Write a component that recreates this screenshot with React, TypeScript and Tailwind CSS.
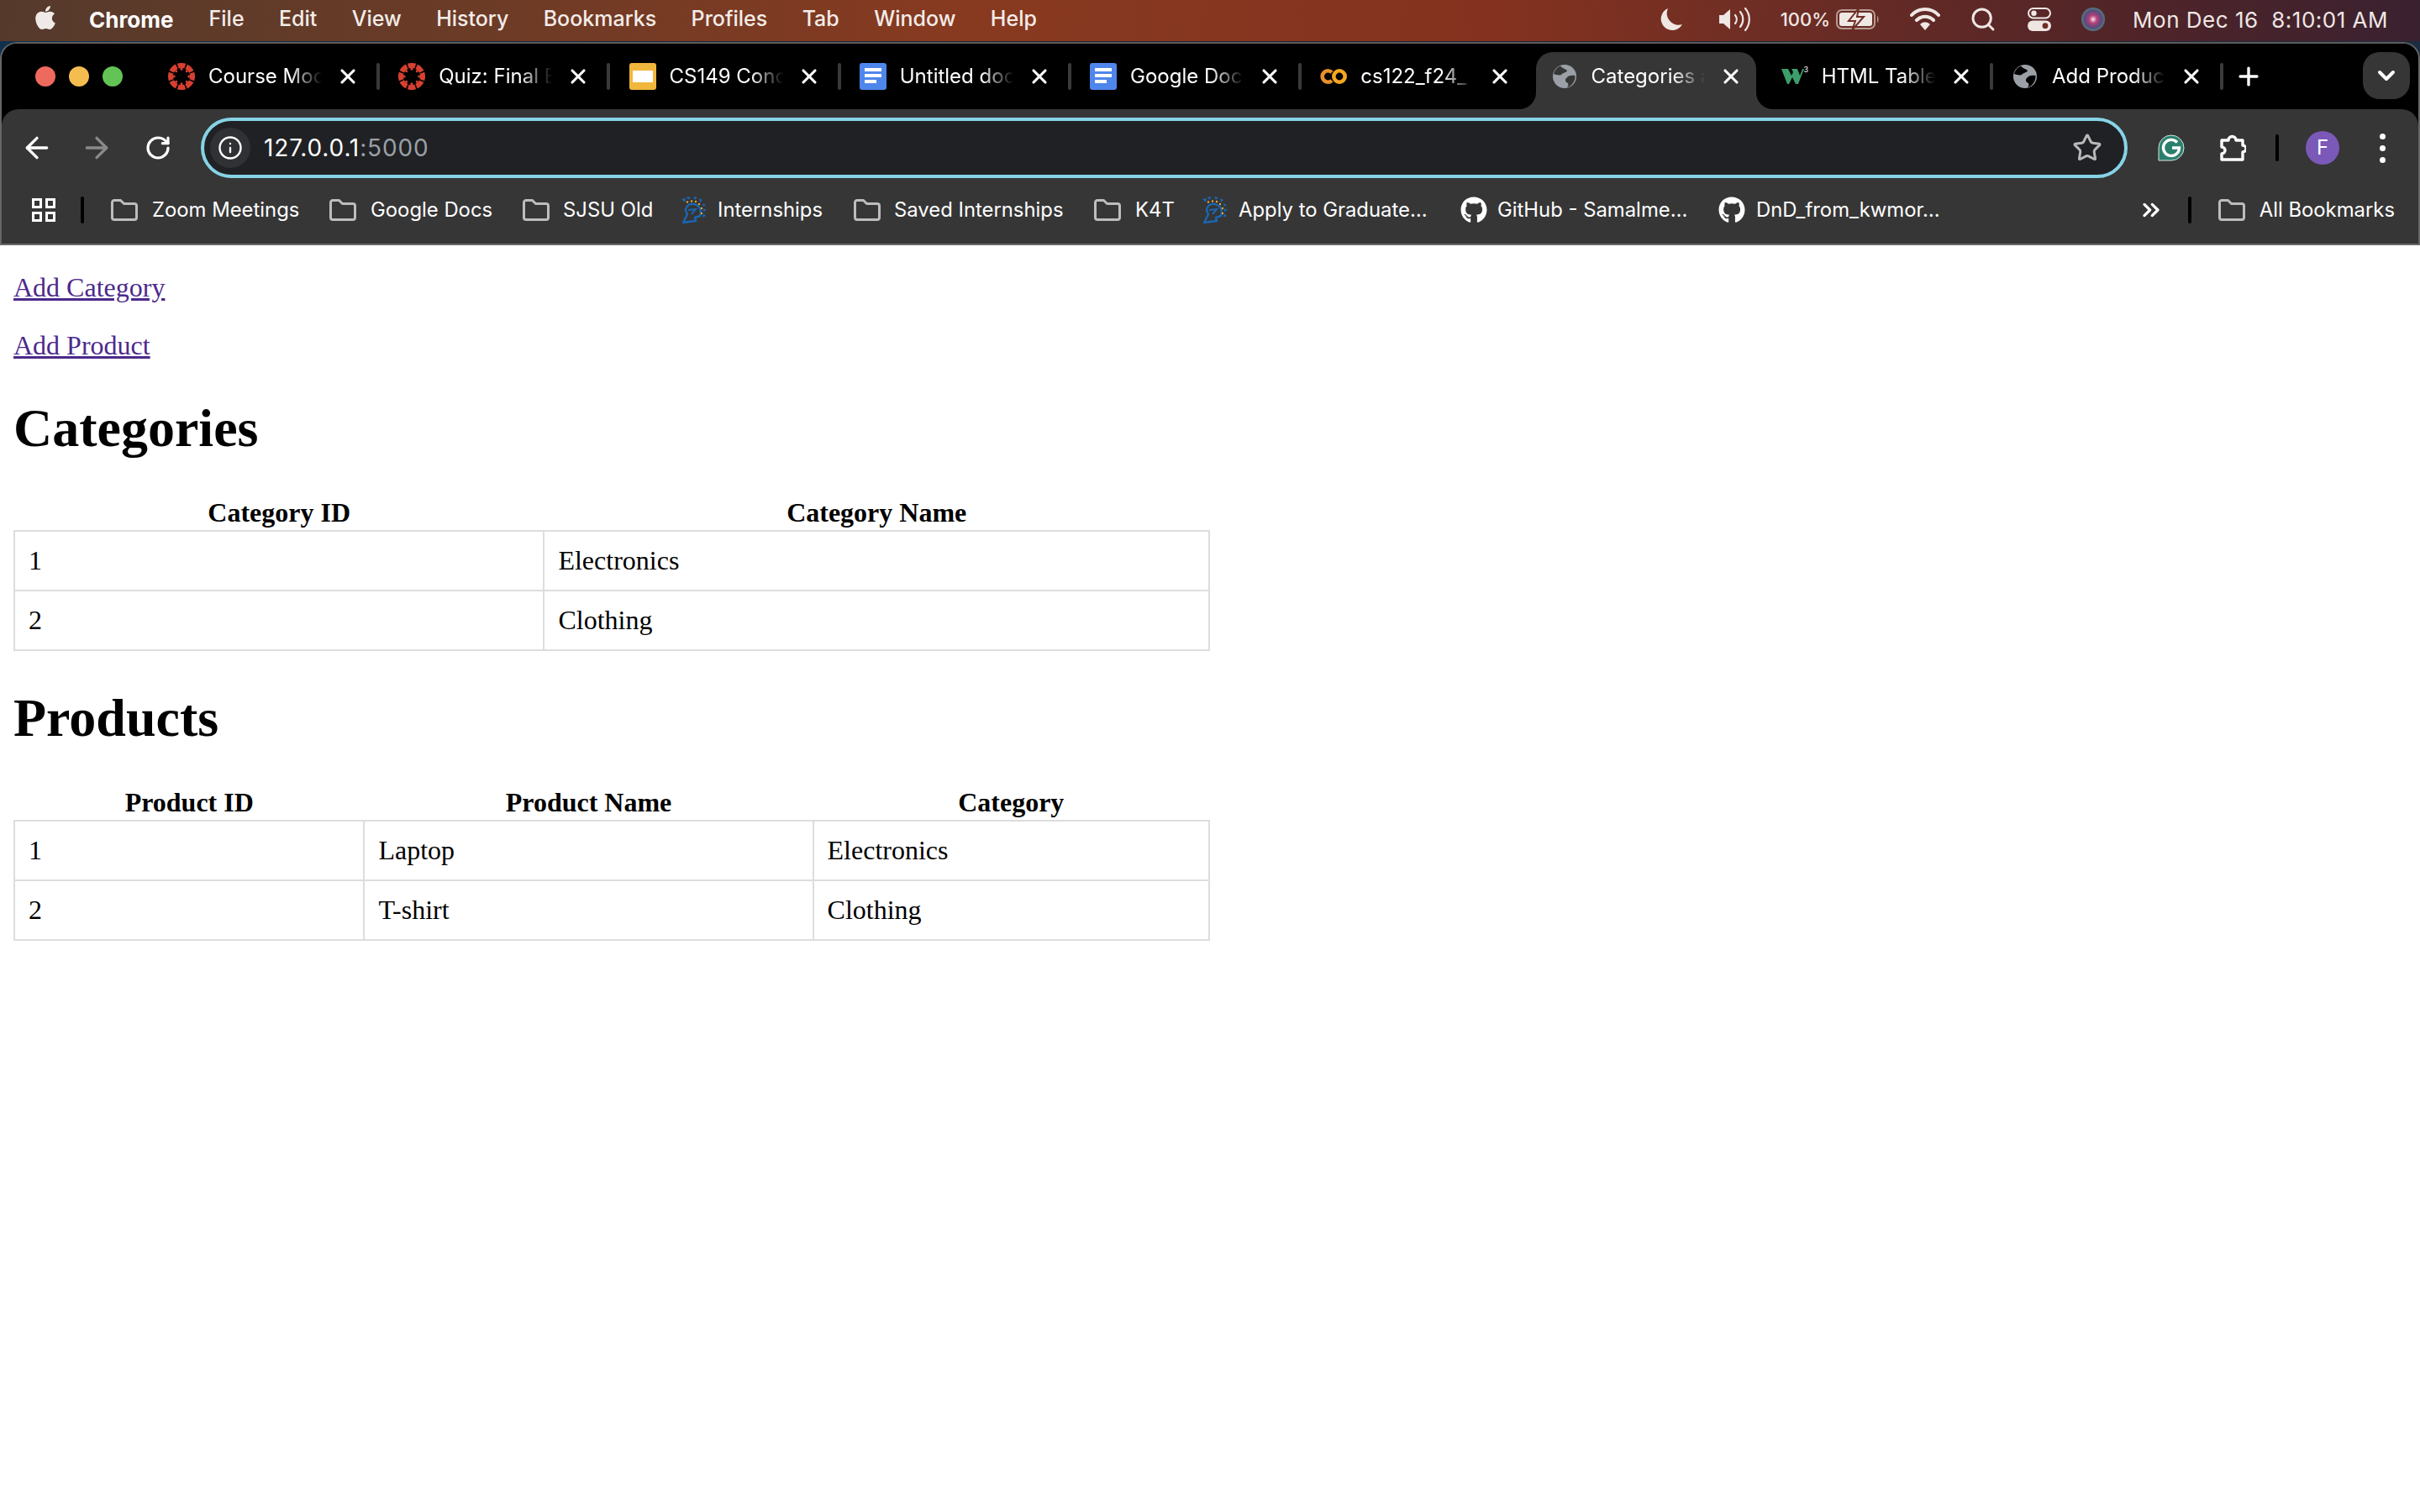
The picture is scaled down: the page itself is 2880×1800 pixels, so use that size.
import React from "react";
import { ArrowLeft, ArrowRight, ChevronDown, ChevronsRight, Info, Plus, RotateCw, Search, Star, X } from "lucide-react";
import { FaApple, FaGithub } from "react-icons/fa";

const Canvas = () => (
  <svg width="32" height="32" viewBox="0 0 32 32" className="shrink-0">
    <circle cx="16" cy="16" r="13" fill="none" stroke="#d64031" strokeWidth="6" pathLength="80" strokeDasharray="8.4 1.6" transform="rotate(-108.9 16 16)" />
    {[0, 45, 90, 135, 180, 225, 270, 315].map((a) => (
      <circle key={a} cx="16" cy="7.2" r="1.5" fill="#d64031" transform={`rotate(${a} 16 16)`} />
    ))}
  </svg>
);
const Slides = () => (
  <div className="w-8 h-8 shrink-0 rounded-[3px] bg-[#f1b63c] flex items-center justify-center">
    <div className="w-6 h-[14px] bg-white" />
  </div>
);
const Docs = () => (
  <div className="w-8 h-8 shrink-0 rounded-[3px] bg-[#4f86ec] flex flex-col gap-[3px] pl-[6px] pt-[6px]">
    <div className="w-5 h-1 bg-white" />
    <div className="w-5 h-1 bg-white" />
    <div className="w-[14px] h-1 bg-white" />
  </div>
);
const Colab = () => (
  <svg width="32" height="32" viewBox="0 0 32 32" className="shrink-0">
    <circle cx="23" cy="16" r="6.7" fill="none" stroke="#f5a623" strokeWidth="4.6" />
    <path d="M14 11.2 A6.7 6.7 0 1 0 14 20.8" fill="none" stroke="#e8912a" strokeWidth="4.6" />
  </svg>
);
const Globe = ({ dark }: { dark: string }) => (
  <svg width="28" height="28" viewBox="0 0 28 28" className="shrink-0 mx-[2px]">
    <circle cx="14" cy="14" r="14" fill="#9aa0a6" />
    <path d="M9 1.5 C12 5 15 5 17 7 C16 10 12 9 10 12 C8 13 4 12 1 11 C2 7 5 3 9 1.5 Z" fill={dark} />
    <path d="M26.5 13 C22 12 18 13 16 16 C14 18 15 21 18 22 C19 24 18 26 17 27 C22 26 27 20 26.5 13 Z" fill={dark} />
  </svg>
);
const W3 = () => (
  <svg width="32" height="32" viewBox="0 0 32 32" className="shrink-0">
    <path d="M0 7 H8 L12 15 L14 11 L12 7 H19 L22 15 L25 7 H27 L20 25 H17 L13 17 L9 25 H7 Z" fill="#3d9d6b" />
    <text x="26.5" y="11" fontSize="9" fill="#fff" fontFamily="Inter, sans-serif">3</text>
  </svg>
);
const Folder = () => (
  <svg width="32" height="26" viewBox="0 0 32 26" className="shrink-0">
    <path d="M1.5 4 A2.5 2.5 0 0 1 4 1.5 H11.5 L15.5 5.5 H28 A2.5 2.5 0 0 1 30.5 8 V22 A2.5 2.5 0 0 1 28 24.5 H4 A2.5 2.5 0 0 1 1.5 22 Z" fill="none" stroke="#bdbdbd" strokeWidth="3" strokeLinejoin="round" />
  </svg>
);
const Spartan = () => (
  <svg width="30" height="32" viewBox="0 0 30 32" className="shrink-0">
    <path d="M2 31 L7 21 L5 17 C5 11 10 8 15 9 C20 10 23 14 23 19 L22 23 L16 25 L17 29 Z" fill="none" stroke="#1a66b3" strokeWidth="2.4" strokeLinejoin="round" />
    <path d="M8 16 L17 15 L12 21" fill="none" stroke="#1a66b3" strokeWidth="2" />
    <path d="M0 3 L5 2 L4 7 Z M6 0 L11 1 L8 4 Z M14 0 L19 1 L16 4 Z M21 2 L25 4 L22 7 Z M25 8 L29 10 L26 12 Z M26 14 L30 16 L26 18 Z M26 20 L29 23 L25 25 Z" fill="#1a66b3" />
    <circle cx="7" cy="6.5" r="1.2" fill="#e6a92f" />
    <circle cx="12" cy="5.5" r="1.2" fill="#e6a92f" />
    <circle cx="17" cy="6" r="1.2" fill="#e6a92f" />
    <circle cx="21" cy="9" r="1.2" fill="#e6a92f" />
    <circle cx="24" cy="14" r="1.2" fill="#e6a92f" />
    <circle cx="24" cy="20" r="1.2" fill="#e6a92f" />
  </svg>
);

const tabs = [
  { label: "Course Mod", icon: <Canvas /> },
  { label: "Quiz: Final E", icon: <Canvas /> },
  { label: "CS149 Conc", icon: <Slides /> },
  { label: "Untitled doc", icon: <Docs /> },
  { label: "Google Doc", icon: <Docs /> },
  { label: "cs122_f24_", icon: <Colab />, noSep: true },
  { label: "Categories a", icon: <Globe dark="#363636" />, active: true, noSep: true },
  { label: "HTML Table", icon: <W3 /> },
  { label: "Add Produc", icon: <Globe dark="#000000" /> },
];

const marks = [
  { label: "Zoom Meetings", icon: <Folder />, box: "w-[260px] gap-[17px]" },
  { label: "Google Docs", icon: <Folder />, box: "w-[230px] gap-[17px]" },
  { label: "SJSU Old", icon: <Folder />, box: "w-[189px] gap-[16px]" },
  { label: "Internships", icon: <Spartan />, box: "w-[205px] gap-[13px]" },
  { label: "Saved Internships", icon: <Folder />, box: "w-[286px] gap-[16px]" },
  { label: "K4T", icon: <Folder />, box: "w-[129px] gap-[17px]" },
  { label: "Apply to Graduate…", icon: <Spartan />, box: "w-[307px] gap-[13px]" },
  { label: "GitHub - Samalme…", icon: <FaGithub size={32} color="#fff" className="shrink-0" />, box: "w-[307px] gap-[12px]" },
  { label: "DnD_from_kwmor…", icon: <FaGithub size={32} color="#fff" className="shrink-0" />, box: "w-[280px] gap-[13px]" },
];

const menu = ["File", "Edit", "View", "History", "Bookmarks", "Profiles", "Tab", "Window", "Help"];

const MenuBar = () => (
  <div className="h-[49px] shrink-0 flex items-center pl-[38px] pr-[38px] pb-[3px] text-[25px] text-[#f3ece8] bg-[linear-gradient(90deg,#553a2c_0%,#6c3b26_20%,#883a20_40%,#84321f_62%,#702e24_72%,#502428_88%,#3a2130_100%)]">
    <FaApple size={32} color="#efeae7" className="mb-1" />
    <span className="ml-[36px] text-[26px] font-bold text-white">Chrome</span>
    <div className="ml-[42px] flex gap-[41.4px]">
      {menu.map((m) => (
        <span key={m} className="font-medium">{m}</span>
      ))}
    </div>
    <div className="ml-auto flex items-center text-[#efe7e4]">
      <svg width="32" height="32" viewBox="0 0 32 32"><path d="M12 3 A13.5 13.5 0 1 0 29 22 A14 14 0 0 1 12 3 Z" fill="#efe7e4" /></svg>
      <svg width="40" height="32" viewBox="0 0 40 32" className="ml-[40px]">
        <path d="M1 11 H6 L14 4 V28 L6 21 H1 Z" fill="#efe7e4" />
        <path d="M20 11 A8 8 0 0 1 20 21 M26 7 A14 14 0 0 1 26 25 M32 3 A20 20 0 0 1 32 29" fill="none" stroke="#efe7e4" strokeWidth="2.2" strokeLinecap="round" />
      </svg>
      <span className="ml-[34px] text-[22px] font-medium">100%</span>
      <svg width="52" height="26" viewBox="0 0 52 26" className="ml-[7px]">
        <rect x="1" y="2" width="45" height="22" rx="6" fill="none" stroke="#b79a92" strokeWidth="2" />
        <rect x="4" y="5" width="39" height="16" rx="3" fill="#efe7e4" />
        <path d="M49 9 C51 10 51 16 49 17 Z" fill="#b79a92" />
        <path d="M27 0 L15 15 H23 L19 26 L33 10 H25 Z" fill="#efe7e4" stroke="#6e2e24" strokeWidth="2" />
      </svg>
      <svg width="36" height="28" viewBox="0 0 36 28" className="ml-[36px]">
        <path d="M2 9 A22 22 0 0 1 34 9 M8 15 A14 14 0 0 1 28 15" fill="none" stroke="#efe7e4" strokeWidth="4" strokeLinecap="round" />
        <path d="M12 20 A8 8 0 0 1 24 20 L18 27 Z" fill="#efe7e4" />
      </svg>
      <Search size={32} strokeWidth={2.2} color="#efe7e4" className="ml-[35px]" />
      <svg width="28" height="28" viewBox="0 0 28 28" className="ml-[37px]">
        <rect x="1" y="1" width="26" height="11.5" rx="5.7" fill="none" stroke="#efe7e4" strokeWidth="2" />
        <circle cx="7.5" cy="6.7" r="3.2" fill="#efe7e4" />
        <rect x="0" y="15.5" width="28" height="12.5" rx="6.2" fill="#efe7e4" />
        <circle cx="21" cy="21.7" r="3.4" fill="#6e2e24" />
      </svg>
      <svg width="28" height="28" viewBox="0 0 28 28" className="ml-[36px]">
        <defs>
          <radialGradient id="siri" cx="50%" cy="50%" r="55%">
            <stop offset="0%" stopColor="#f8e8f0" />
            <stop offset="30%" stopColor="#b8407c" />
            <stop offset="65%" stopColor="#5a4a7a" />
            <stop offset="100%" stopColor="#4e8a88" />
          </radialGradient>
        </defs>
        <circle cx="14" cy="14" r="14" fill="url(#siri)" />
      </svg>
      <span className="ml-[33px] text-[26px] tracking-[0.5px] whitespace-pre">Mon Dec 16  8:10:01 AM</span>
    </div>
  </div>
);

const Tab = ({ t }: { t: (typeof tabs)[number] }) => (
  <div className="relative w-[274.25px] h-[68px] shrink-0 flex items-center pl-[24px] pb-[10px]">
    {t.active && (
      <>
        <div className="absolute left-[6px] right-[6px] top-0 bottom-0 rounded-t-[20px] bg-[#363636]" />
        <div className="absolute left-[-14px] bottom-0 w-5 h-5 bg-[#363636]">
          <div className="w-5 h-5 rounded-br-[20px] bg-black" />
        </div>
        <div className="absolute right-[-14px] bottom-0 w-5 h-5 bg-[#363636]">
          <div className="w-5 h-5 rounded-bl-[20px] bg-black" />
        </div>
      </>
    )}
    <div className="relative flex items-center">
      {t.icon}
      <span className="ml-4 mr-[14px] w-[138px] overflow-hidden whitespace-nowrap text-[24px] text-white [mask-image:linear-gradient(to_right,black_70%,transparent_98%)]">
        {t.label}
      </span>
      <X size={28} strokeWidth={2.7} color="#fff" className="shrink-0" />
      <div className={t.noSep ? "ml-[20px] w-1 h-8" : "ml-[20px] w-1 h-8 rounded-full bg-[#3a3a3a]"} />
    </div>
  </div>
);

const TabStrip = () => (
  <div className="h-[78px] shrink-0 flex items-start pt-[10px] bg-black">
    <div className="w-[174px] h-[58px] shrink-0 flex items-center pl-[40px] gap-4 ">
      <div className="w-6 h-6 rounded-full bg-[#ee6a5f]" />
      <div className="w-6 h-6 rounded-full bg-[#f5bd4f]" />
      <div className="w-6 h-6 rounded-full bg-[#61c454]" />
    </div>
    {tabs.map((t) => (
      <Tab key={t.label} t={t} />
    ))}
    <div className="h-[58px] flex items-center ml-[15px]">
      <Plus size={34} strokeWidth={2.4} color="#fff" />
    </div>
    <div className="ml-auto mr-[10px] w-[56px] h-[56px] rounded-[20px] bg-[#363636] flex items-center justify-center">
      <ChevronDown size={32} strokeWidth={3} color="#fff" />
    </div>
  </div>
);

const Toolbar = () => (
  <div className="h-[160px] shrink-0 bg-black">
    <div className="h-full rounded-t-[20px] bg-[#363636] flex flex-col">
      <div className="h-[90px] pt-[10px] pb-[8px] flex items-center pl-[22px]">
        <ArrowLeft size={40} strokeWidth={2} color="#fff" />
        <ArrowRight size={40} strokeWidth={2} color="#8a8a8a" className="ml-[31px]" />
        <RotateCw size={32} strokeWidth={2.4} color="#fff" className="ml-[37px]" />
        <div className="ml-[35px] w-[2293px] h-[72px] rounded-full border-4 border-[#86d3e6] bg-[#202124] flex items-center pl-[7px] pr-[26px]">
          <div className="w-12 h-12 rounded-full bg-[#303134] flex items-center justify-center">
            <Info size={30} strokeWidth={1.9} color="#fff" />
          </div>
          <span className="ml-[16px] text-[28px] tracking-[0.85px] text-white">
            127.0.0.1<span className="text-[#9aa0a6]">:5000</span>
          </span>
          <Star size={36} strokeWidth={2} color="#b8b8b8" className="ml-auto" />
        </div>
        <svg width="32" height="32" viewBox="0 0 32 32" className="ml-[36px]">
          <path d="M16 1 A15 15 0 0 1 16 31 H1 V16 A15 15 0 0 1 16 1 Z" fill="#2b7f6e" stroke="#d8e6e2" strokeWidth="1" />
          <path d="M23 9.5 A9.5 9.5 0 1 0 25.5 16 H17" fill="none" stroke="#fff" strokeWidth="3.4" />
        </svg>
        <svg width="32" height="34" viewBox="0 0 32 34" className="ml-[41px]">
          <path d="M3 8 H11 A4.5 4.5 0 0 1 20 8 H28 V14 A4 4 0 0 1 28 22 V31 H3 V24 A4 4 0 0 0 3 16 Z" fill="none" stroke="#fff" strokeWidth="3.4" strokeLinejoin="round" />
        </svg>
        <div className="ml-[35px] w-1 h-8 rounded-full bg-black" />
        <div className="ml-[32px] w-10 h-10 rounded-full bg-[#7a59b8] flex items-center justify-center text-[24px] text-white">F</div>
        <div className="ml-[48px] flex flex-col gap-[7px]">
          <div className="w-[7px] h-[7px] rounded-full bg-white" />
          <div className="w-[7px] h-[7px] rounded-full bg-white" />
          <div className="w-[7px] h-[7px] rounded-full bg-white" />
        </div>
      </div>
      <div className="h-[60px] flex items-center pl-[36px] pr-[28px] text-[23.85px] text-white">
        <svg width="28" height="28" viewBox="0 0 28 28" className="shrink-0">
          <g fill="none" stroke="#fff" strokeWidth="3">
            <rect x="1.5" y="1.5" width="9" height="9" />
            <rect x="17.5" y="1.5" width="9" height="9" />
            <rect x="1.5" y="17.5" width="9" height="9" />
            <rect x="17.5" y="17.5" width="9" height="9" />
          </g>
        </svg>
        <div className="ml-[30px] mr-[32px] w-1 h-8 rounded-full bg-black" />
        {marks.map((m) => (
          <div key={m.label} className={`flex items-center shrink-0 ${m.box}`}>
            {m.icon}
            <span className="whitespace-nowrap">{m.label}</span>
          </div>
        ))}
        <ChevronsRight size={32} strokeWidth={2.4} color="#fff" className="ml-auto" />
        <div className="ml-[28px] mr-[32px] w-1 h-8 rounded-full bg-black" />
        <Folder />
        <span className="ml-[17px] whitespace-nowrap">All Bookmarks</span>
      </div>
    </div>
  </div>
);

const Table = ({ head, rows }: { head: string[]; rows: string[][] }) => (
  <table className="w-[1424px] border-collapse">
    <thead>
      <tr>
        {head.map((h) => (
          <th key={h} className="p-[2px] font-bold text-center">{h}</th>
        ))}
      </tr>
    </thead>
    <tbody>
      {rows.map((r) => (
        <tr key={r[0]}>
          {r.map((c) => (
            <td key={c} className="border-2 border-[#dddddd] p-4 text-left">{c}</td>
          ))}
        </tr>
      ))}
    </tbody>
  </table>
);

export default function App() {
  return (
    <div className="w-[2880px] h-[1800px] overflow-hidden flex flex-col bg-white font-['Inter',sans-serif]">
      <MenuBar />
      <div className="shrink-0 pt-[1px] bg-[linear-gradient(90deg,#10304d,#1a2030_40%,#1a2030_70%,#1c2c42)]">
        <div className="rounded-t-[20px] border-x-2 border-t-2 border-b-2 border-x-[#666666] border-t-[#5c5c5c] border-b-[#6a6a6a] overflow-hidden">
          <TabStrip />
          <Toolbar />
        </div>
      </div>
      <main className="px-4 font-['Liberation_Serif',serif] text-[32px] leading-[37px] text-black">
        <p className="my-8"><a href="#a" className="text-[#4b2a8b] underline">Add Category</a></p>
        <p className="my-8"><a href="#b" className="text-[#4b2a8b] underline">Add Product</a></p>
        <h1 className="my-[43px] text-[64px] leading-[74px] font-bold">Categories</h1>
        <Table head={["Category ID", "Category Name"]} rows={[["1", "Electronics"], ["2", "Clothing"]]} />
        <h1 className="my-[43px] text-[64px] leading-[74px] font-bold">Products</h1>
        <Table head={["Product ID", "Product Name", "Category"]} rows={[["1", "Laptop", "Electronics"], ["2", "T-shirt", "Clothing"]]} />
      </main>
    </div>
  );
}
